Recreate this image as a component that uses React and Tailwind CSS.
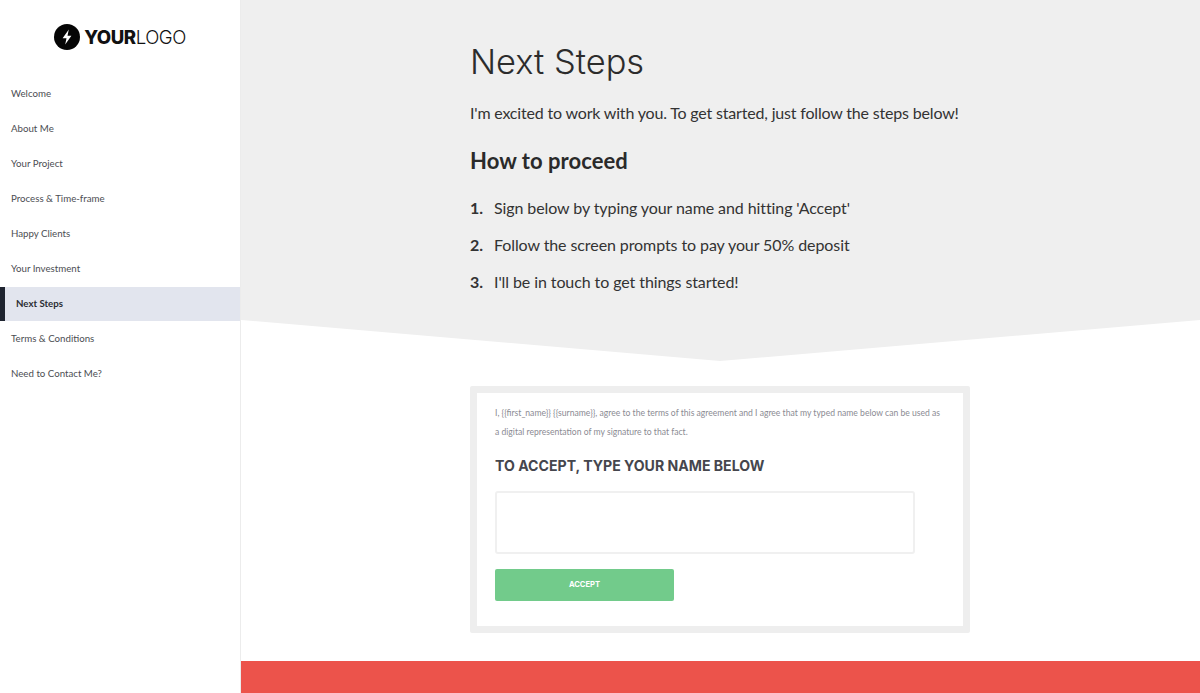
const nav = ["Welcome","About Me","Your Project","Process & Time-frame","Happy Clients","Your Investment","Next Steps","Terms & Conditions","Need to Contact Me?"];
const steps = ["Sign below by typing your name and hitting 'Accept'","Follow the screen prompts to pay your 50% deposit","I'll be in touch to get things started!"];

export default function App() {
  return (
    <div className="flex h-[693px] w-[1200px] overflow-hidden bg-white font-['Lato','Liberation_Sans',sans-serif]">
      <aside className="w-[241px] shrink-0 border-r border-[#ececec] bg-white">
        <div className="flex h-[76px] items-start justify-center pt-[24px]">
          <svg width="26" height="26" viewBox="0 0 26 26" className="mr-[4px]">
            <circle cx="13" cy="13" r="13" fill="#050505" />
            <path d="M14.8 5.5 8.6 14.2h3.9l-1.3 6.3 6.2-8.7h-3.9z" fill="#fff" />
          </svg>
          <div className="flex h-[26px] items-center text-[18.6px] leading-none text-[#111] font-['Inter',sans-serif] tracking-[-0.45px]">
            <span className="font-extrabold">YOUR</span><span className="font-light">LOGO</span>
          </div>
        </div>
        <nav>
          {nav.map((n) => n === "Next Steps" ? (
            <div key={n} className="mt-[1px] flex h-[34px] items-center border-l-[5px] border-[#1f2430] bg-[#e2e5ee] pb-[1px] pl-[11px] text-[9.7px] font-bold text-[#2b2d33]">{n}</div>
          ) : (
            <div key={n} className="flex h-[35px] items-center pl-[11px] text-[9.7px] text-[#4b4d52]">{n}</div>
          ))}
        </nav>
      </aside>
      <main className="flex min-w-0 flex-1 flex-col">
        <section className="h-[320px] bg-[#efefef] pl-[229px] text-[#2a2a2a]">
          <h1 className="pt-[40px] text-[34.4px] leading-[44px] font-light tracking-[0px] font-['Inter',sans-serif] text-[#2c2c2c]">Next Steps</h1>
          <p className="mt-[17px] text-[16px] leading-[24px] text-[#333] tracking-[-0.18px]">I'm excited to work with you. To get started, just follow the steps below!</p>
          <h2 className="mt-[21px] text-[22px] leading-[30px] font-bold tracking-[0.05px]">How to proceed</h2>
          <ol className="mt-[20px] flex flex-col gap-[13px]">
            {steps.map((s, i) => (
              <li key={s} className="flex text-[16px] leading-[24px] text-[#333] tracking-[-0.09px]">
                <span className="w-[24px] font-bold">{i + 1}.</span><span>{s}</span>
              </li>
            ))}
          </ol>
        </section>
        <svg width="959" height="41" viewBox="0 0 959 41" className="block shrink-0">
          <polygon points="0,0 959,0 479,41" fill="#efefef" />
        </svg>
        <div className="flex flex-1 flex-col justify-between pt-[25px]">
          <div className="ml-[229px] h-[247px] w-[500px] rounded-[2px] border-[7px] border-[#eeeeee] bg-white pl-[18px] pt-[11px]">
            <p className="w-[450px] text-[8.6px] leading-[19px] text-[#8b8b93]">I, &#123;&#123;first_name&#125;&#125; &#123;&#123;surname&#125;&#125;, agree to the terms of this agreement and I agree that my typed name below can be used as a digital representation of my signature to that fact.</p>
            <h3 className="mt-[14px] text-[14.1px] leading-[20px] font-bold text-[#45464d] font-['Inter',sans-serif]">TO ACCEPT, TYPE YOUR NAME BELOW</h3>
            <div className="mt-[15px] h-[63px] w-[420px] rounded-[3px] border-2 border-[#f0f0f0] bg-white" />
            <div className="mt-[15px] flex h-[32px] w-[179px] items-center justify-center rounded-[2px] bg-[#72cb8b] text-[7.6px] font-bold text-white font-['Inter',sans-serif]">ACCEPT</div>
          </div>
          <div className="h-[32px] bg-[#ec534b]" />
        </div>
      </main>
    </div>
  );
}
